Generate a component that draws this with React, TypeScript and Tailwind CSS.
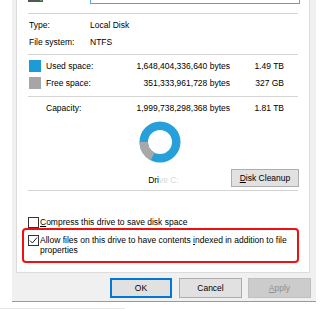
import React from "react";

const Sep = ({ mt }: { mt: string }) => (
  <div className={`${mt} h-px w-[270px] bg-[#d4d4d4]`} />
);

function Check({ checked }: { checked?: boolean }) {
  return (
    <div className="w-[11px] h-[11px] border border-[#333333] bg-white flex items-center justify-center shrink-0">
      {checked && (
        <svg width="9" height="9" viewBox="0 0 9 9">
          <path d="M1 4.6 L3.4 7 L8 1.6" fill="none" stroke="#222" strokeWidth="1" />
        </svg>
      )}
    </div>
  );
}

export default function App() {
  return (
    <div
      className="w-[320px] h-[309px] bg-white overflow-hidden text-black"
      style={{ fontFamily: '"Liberation Sans", Arial, sans-serif' }}
    >
      <div className="text-[8.5px]">
        {/* window */}
        <div className="ml-[12px] w-[304px] h-[302px] bg-[#f0f0f0] border-b border-[#9a9a9a] flex flex-col">
          {/* white panel */}
          <div className="ml-[4px] w-[294px] h-[273px] bg-white border-l border-r border-b border-[#dcdcdc] overflow-hidden pl-[11px]">
            {/* top row */}
            <div className="-mt-[20px] h-[24px] flex items-end">
              <svg width="16" height="24" viewBox="0 0 16 24" className="block">
                <rect x="0" y="10" width="15" height="10" fill="#9a9a9a" />
                <rect x="0" y="18" width="15" height="4" fill="#555555" />
                <rect x="12" y="19" width="2" height="2" fill="#3bb54a" />
              </svg>
              <div className="ml-[46px] w-[210px] h-[22px] border border-[#5ba0e4] bg-white" />
            </div>
            <Sep mt="mt-[9px]" />
            <div className="mt-[5px] h-[12px] leading-[12px] flex">
              <span className="w-[62px] pl-[1px]">Type:</span>
              <span>Local Disk</span>
            </div>
            <div className="mt-[5px] h-[12px] leading-[12px] flex">
              <span className="w-[62px] pl-[1px]">File system:</span>
              <span>NTFS</span>
            </div>
            <Sep mt="mt-[6px]" />
            <div className="mt-[5px] h-[12px] leading-[12px] flex items-center">
              <div className="w-[12px] h-[12px] bg-[#1e9bd7] ml-[1px]" />
              <span className="ml-[5px] w-[80px]">Used space:</span>
              <span className="w-[106px] text-right -ml-[2px]">1,648,404,336,640 bytes</span>
              <span className="w-[54px] text-right">1.49 TB</span>
            </div>
            <div className="mt-[5px] h-[12px] leading-[12px] flex items-center">
              <div className="w-[12px] h-[12px] bg-[#a6a6a6] ml-[1px]" />
              <span className="ml-[5px] w-[80px]">Free space:</span>
              <span className="w-[106px] text-right -ml-[2px]">351,333,961,728 bytes</span>
              <span className="w-[54px] text-right">327 GB</span>
            </div>
            <Sep mt="mt-[7px]" />
            <div className="mt-[5px] h-[12px] leading-[12px] flex items-center">
              <div className="w-[12px] h-[12px] ml-[1px]" />
              <span className="ml-[5px] w-[80px]">Capacity:</span>
              <span className="w-[106px] text-right -ml-[2px]">1,999,738,298,368 bytes</span>
              <span className="w-[54px] text-right">1.81 TB</span>
            </div>
            <div className="mt-[7px] w-[270px] flex justify-center">
              <svg width="42" height="42" viewBox="0 0 42 42" className="block ml-[-6px]">
                <circle cx="21" cy="21" r="16.25" fill="none" stroke="#26a0da" strokeWidth="8.5" />
                <path d="M13.62 35.48 A16.25 16.25 0 0 1 4.75 21" fill="none" stroke="#a8a8a8" strokeWidth="8.5" />
              </svg>
            </div>
            <div className="mt-[6px] w-[271px] grid grid-cols-[1fr_auto_1fr] items-center">
              <div />
              <span className="leading-[12px] mt-[4px]">
                Dri<span className="text-[#d6d6d6]">ve C:</span>
              </span>
              <div className="flex justify-end">
                <div className="w-[68px] h-[18px] bg-[#e1e1e1] border border-[#adadad] flex items-center justify-center leading-[12px]">
                  <span>
                    <span className="underline">D</span>isk Cleanup
                  </span>
                </div>
              </div>
            </div>
            <Sep mt="mt-[3px]" />
            <div className="mt-[25px] h-[12px] flex items-center">
              <Check />
              <span className="ml-[1px] leading-[12px]">
                <span className="underline">C</span>ompress this drive to save disk space
              </span>
            </div>
            <div className="-ml-[6px] w-[277px] h-[35px] border-2 border-[#f01010] rounded-[4px] pl-[4px] pt-[5px] flex items-start">
              <Check checked />
              <span className="ml-[1px] leading-[10px] -mt-[0px]">
                Allow files on this drive to have contents <span className="underline">i</span>ndexed in addition to file
                <br />
                properties
              </span>
            </div>
          </div>
          {/* buttons */}
          <div className="mt-[5px] flex justify-end pr-[5px]">
            <div className="w-[62px] h-[20px] bg-[#e1e1e1] border-2 border-[#0078d7] flex items-center justify-center">
              OK
            </div>
            <div className="ml-[7px] w-[63px] h-[20px] bg-[#e1e1e1] border border-[#adadad] flex items-center justify-center">
              Cancel
            </div>
            <div className="ml-[6px] w-[63px] h-[20px] bg-[#cccccc] border border-[#bfbfbf] text-[#8f8f8f] flex items-center justify-center">
              <span>
                <span className="underline">A</span>pply
              </span>
            </div>
          </div>
        </div>
        <div className="mt-[6px] w-[125px] h-px bg-[#e6e6e6]" />
      </div>
    </div>
  );
}
